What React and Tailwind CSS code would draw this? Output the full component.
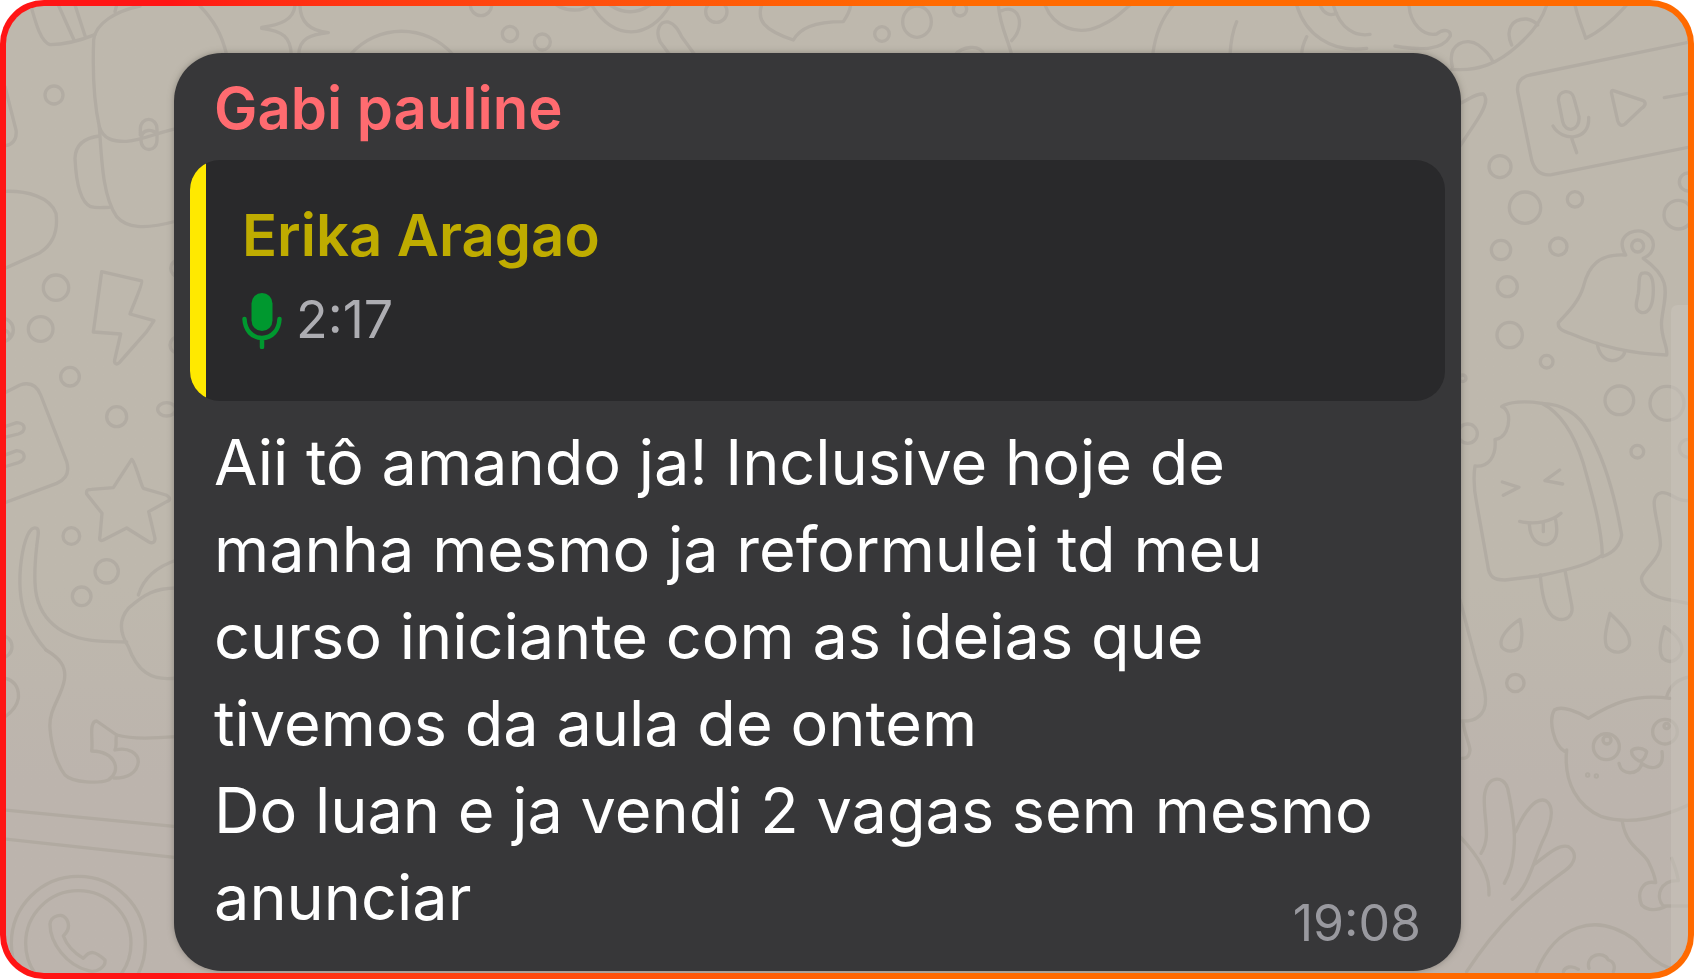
import React from 'react';

// Doodles are drawn in groups. Each group has its own origin on the 1695x980
// wallpaper and uses units of a third of a pixel.
const doodles = [
  {
    x: 0,
    y: 0,
    paths: [
      'M92 15C105 60 120 125 150 134C200 134 245 120 285 104M175 15L222 120M225 15L257 113',
      'M420 18C350 32 285 70 281 120C278 200 280 300 298 380C310 418 340 425 380 424C430 420 470 398 530 386M345 35L350 15M600 18C640 60 665 100 680 165',
      'M298 408C250 414 226 435 225 475C228 540 240 605 272 620C290 625 310 622 328 622M298 380C305 480 308 590 350 650C380 684 430 690 530 663',
      'M421 405V388C421 348 471 348 471 388V420C471 458 423 458 423 420C423 380 465 390 470 402',
      'M15 260L48 390C52 420 35 435 15 437',
      'M15 574C80 572 150 590 168 640C176 700 155 735 120 758L15 805',
      'M305 815L425 843C430 850 395 925 390 942L462 962L440 995L358 1088C350 1096 342 1090 344 1080L362 1002L280 996Z',
      'M785 82C840 75 882 60 885 15M900 15C900 60 925 92 985 98C930 104 897 115 896 165M785 85C850 93 872 112 874 165',
    ],
    circles: [[162, 285, 27], [168, 863, 38], [122, 987, 37], [5, 990, 35], [538, 805, 26]],
  },
  {
    x: 0,
    y: 330,
    paths: [
      'M15 188L60 165C90 155 110 165 122 195L200 395C210 430 195 450 170 460L15 518',
      'M15 290L50 278C80 280 78 305 55 312L15 322M15 375L50 362C80 365 78 390 55 398L15 410',
      'M395 388C405 392 422 465 430 475L498 495C512 502 512 512 500 515L446 545L465 625C465 640 455 640 447 636L380 594L310 630C300 634 297 630 300 618L306 550L260 492C258 480 262 478 275 478L340 473Z',
      'M138 960C90 905 45 830 64 690C72 630 90 585 110 595C120 600 112 625 110 650C98 760 95 850 190 905C250 938 320 935 380 936',
      'M530 690C470 710 430 745 415 795M530 774C465 775 435 790 385 835C355 870 360 910 385 950C410 1020 450 1055 530 1044',
      'M15 0C25 5 30 12 30 20',
    ],
    circles: [[210, 140, 28], [350, 260, 30], [214, 618, 25], [320, 724, 35], [245, 799, 28], [535, 45, 25], [2, 950, 34]],
    ellipses: [[500, 238, 27, 20]],
  },
  {
    x: 0,
    y: 650,
    faint: true,
    paths: [
      'M138 0C180 25 200 50 193 90C185 140 145 180 150 235C155 300 175 350 195 375C220 400 300 400 325 390C365 365 350 305 275 303C280 270 265 215 290 213L350 255C400 268 460 265 530 260',
      'M350 255C345 270 352 285 345 300C385 290 415 310 415 335C412 370 380 385 342 384',
      'M15 85C40 90 58 110 55 145C50 175 30 190 15 200',
      'M15 480L530 530M15 567L530 623',
      'M150 822C152 800 185 785 200 808C210 825 208 840 190 858C200 885 225 910 250 925C270 900 285 902 315 930C318 950 290 970 265 962C200 945 150 880 150 822Z',
    ],
    circles: [[235, 880, 201], [235, 880, 158]],
  },
  {
    x: 280,
    y: 0,
    paths: [
      'M210 165C290 70 440 70 520 165',
      'M830 15C860 35 910 35 930 15M935 15C1000 125 1110 120 1170 15M990 15C1030 42 1070 42 1110 15',
      'M1170 165L1140 125C1125 90 1140 62 1165 66C1185 72 1195 90 1205 110L1245 165',
      'M1445 15C1430 60 1450 90 1540 120C1560 85 1600 65 1690 65C1700 50 1710 35 1712 15',
    ],
    circles: [[603, 15, 32], [690, 102, 23], [787, 126, 24], [1309, 35, 32]],
  },
  {
    x: 840,
    y: 0,
    paths: [
      'M475 15C480 80 505 120 515 165M485 32C535 10 560 75 515 122M345 165C365 140 420 130 432 165',
      'M615 15C640 80 710 110 780 78C830 55 840 40 870 15M1000 15C960 60 945 110 938 165M1190 65C1175 100 1172 130 1170 165',
      'M1370 15C1395 100 1470 160 1580 145M1480 15C1500 90 1550 110 1590 103M1400 110C1390 130 1385 150 1385 165M1440 15C1450 40 1470 50 1490 40',
    ],
    circles: [[126, 102, 22], [360, 28, 20]],
    ellipses: [[231, 65, 43, 47]],
  },
  {
    x: 1395,
    y: 0,
    paths: [
      'M42 15C45 70 85 110 125 102C145 85 168 90 166 108C140 155 70 150 0 138',
      'M172 200C155 130 215 110 250 135C270 150 285 165 292 182M350 135C330 90 350 55 395 57C410 60 420 65 428 75',
      'M170 208C250 215 310 190 370 135C410 100 440 65 455 15',
      'M540 15C550 60 565 90 572 115C615 95 655 60 695 15',
      'M890 125L405 225C375 232 365 250 368 275L410 480C420 515 440 528 470 524L890 440',
      'M490 300C490 270 530 265 537 295L552 350C555 395 510 400 503 365ZM474 378C500 425 585 425 581 352M530 415L545 458',
      'M655 272L745 302C755 310 750 318 740 325L690 372C680 380 672 375 668 362L650 282C648 275 650 270 655 272Z',
      'M808 293L890 278',
      'M195 310C220 300 240 280 265 282C285 300 260 340 240 370L195 438',
      'M692 765C610 760 580 800 565 860C550 910 510 945 490 968C488 985 500 992 530 1002C620 1040 700 1060 815 1065C820 1040 795 1010 800 960C810 880 835 840 745 775M692 765C660 710 710 685 745 695C790 715 780 760 745 775',
      'M740 820C770 812 775 840 775 870C775 910 765 940 740 938C715 930 725 905 730 880C735 850 728 830 740 820Z',
      'M607 1030C615 1100 685 1090 690 1052',
    ],
    circles: [[315, 500, 33], [390, 623, 47], [540, 598, 23], [490, 740, 26], [318, 750, 29], [337, 860, 30], [344, 1005, 38], [455, 1085, 19], [728, 738, 18], [850, 644, 43], [880, 546, 27]],
  },
  {
    x: 1395,
    y: 330,
    paths: [
      'M320 230C340 215 390 212 440 220C500 250 540 320 565 400C590 490 620 590 622 675C590 700 540 715 430 738L330 750C295 750 282 740 278 705L245 520C235 470 235 440 240 408C280 412 305 380 300 328C330 325 345 290 340 255C335 240 330 232 320 230Z',
      'M440 220C500 222 550 250 580 305C630 390 660 500 680 615C675 650 650 670 622 680',
      'M322 456L372 472L325 496M494 420L450 452L503 462',
      'M374 574C420 585 470 575 498 550M403 582C405 630 430 645 455 644C485 635 490 610 482 570M445 580V605',
      'M436 735C440 790 450 830 465 850C485 880 540 875 530 825L510 722',
      'M375 868C340 890 310 925 320 950C335 970 365 965 375 950C385 920 380 895 375 868ZM645 850C635 890 625 925 635 950C655 975 690 970 703 945C710 910 675 880 645 850ZM808 890C795 930 790 965 803 985C825 1005 850 990 860 965C865 930 830 905 808 890Z',
      'M890 510C845 520 830 485 800 488C765 495 780 540 785 570C800 640 805 660 770 700C735 740 735 745 745 765C780 820 850 805 890 825',
      'M195 810L245 1000C265 1060 285 1120 260 1150C240 1175 215 1173 200 1173',
    ],
    circles: [[218, 311, 29], [673, 211, 43], [816, 220, 51], [727, 365, 19], [880, 355, 27], [203, 145, 10]],
  },
  {
    x: 1395,
    y: 650,
    faint: true,
    paths: [
      'M205 220C208 250 222 275 225 300C222 325 210 325 200 325',
      'M580 205C550 185 500 165 478 180C460 210 475 285 510 305M580 205C650 160 720 130 825 145M815 140C825 105 850 85 890 80M515 300C505 400 550 470 620 500C700 525 800 505 890 460',
      'M710 302C720 292 745 292 755 305C752 325 740 335 732 333C718 325 708 315 710 302ZM672 340C680 380 735 375 740 340C760 358 810 365 801 305',
      'M682 515C695 590 740 600 760 635C775 665 780 680 782 698M782 698C740 690 725 730 740 765C760 785 790 780 815 768M850 692C795 690 780 740 805 768H890M850 692C845 660 835 640 830 625',
      'M195 560C260 630 285 680 282 735M258 610C290 560 265 510 268 440C275 375 325 375 338 415C350 470 360 530 358 580C355 640 345 670 328 700',
      'M362 545C385 490 420 440 452 452C480 470 470 520 440 580C410 650 400 710 352 748M415 645C450 620 490 580 520 590C550 610 540 640 510 662C400 740 310 820 215 965',
      'M425 965C480 830 600 780 720 870C750 900 770 935 825 955M505 965C510 950 530 945 550 958M582 955C570 915 625 900 640 930C660 935 660 955 655 965',
    ],
    circles: [[361, 99, 26], [634, 290, 39], [810, 245, 37], [636, 270, 12], [815, 228, 8], [578, 375, 3], [604, 378, 3]],
  },
];

function Wallpaper() {
  return (
    <svg
      className="absolute inset-0 h-full w-full"
      viewBox="6 6 1682 967"
      preserveAspectRatio="xMidYMid slice"
      fill="none"
      strokeLinecap="round"
      strokeLinejoin="round"
      aria-hidden="true"
    >
      {doodles.map((group) => (
        <g
          key={`${group.x}-${group.y}`}
          transform={`translate(${group.x} ${group.y}) scale(0.33333)`}
          stroke={group.faint ? '#b1aaa1' : '#b2aca3'}
          strokeWidth="10"
        >
          {group.paths.map((d) => (
            <path key={d} d={d} />
          ))}
          {group.circles.map(([cx, cy, r]) => (
            <circle key={`${cx}-${cy}`} cx={cx} cy={cy} r={r} />
          ))}
          {(group.ellipses || []).map(([cx, cy, rx, ry]) => (
            <ellipse key={`${cx}-${cy}`} cx={cx} cy={cy} rx={rx} ry={ry} />
          ))}
        </g>
      ))}
      {/* Scroll track */}
      <path d="M1671 312Q1671 305 1678 305H1688V973H1671Z" fill="#cac4bb" fillOpacity="0.5" />
    </svg>
  );
}

function MicIcon() {
  return (
    <svg className="h-[57px] w-10 shrink-0" viewBox="0 0 40 57" fill="none" aria-hidden="true">
      <rect x="9.500" y="1" width="21" height="38" rx="10.500" fill="#00982f" />
      <path
        d="M2.500 27C3 38 10 46 20 46S37 38 37.500 27M20 46V55"
        stroke="#00982f"
        strokeWidth="4.500"
        strokeLinecap="round"
      />
    </svg>
  );
}

function QuotedMessage({ author, duration }) {
  return (
    <blockquote className="flex h-[241px] overflow-hidden rounded-[30px] bg-[#29292b]">
      <div className="w-4 shrink-0 bg-[#ffe900]" />
      <div className="pt-10 pl-9">
        <p className="text-[58px] leading-[71px] font-semibold text-[#bfac00]">{author}</p>
        <div className="mt-2.5 flex items-center gap-3.5">
          <MicIcon />
          <span className="text-[52px] leading-[78px] text-[#adadb2]">{duration}</span>
        </div>
      </div>
    </blockquote>
  );
}

function MessageBubble({ author, quote, lines, time }) {
  return (
    <article className="relative rounded-[48px] bg-[#373739] px-4 pb-[30px] shadow-[0_0_6px_rgba(90,85,78,0.5)]">
      <h2 className="px-6 pt-[18px] pb-[14px] text-[58px] leading-[75px] font-semibold text-[#ff6b70]">{author}</h2>
      <QuotedMessage author={quote.author} duration={quote.duration} />
      <div className="px-6 pt-[18px]">
        <p className="text-[63px] leading-[87px] text-white">
          {lines.map((line) => (
            <span key={line} className="block whitespace-nowrap">
              {line}
            </span>
          ))}
        </p>
      </div>
      <time className="absolute right-10 bottom-4 text-[50px] leading-[64px] text-[#99999f]">{time}</time>
    </article>
  );
}

export default function App() {
  return (
    <main className="min-h-screen bg-white pr-px pb-px font-['Inter',sans-serif]">
      <div className="rounded-[44px] bg-linear-to-r from-[#ff1515] from-10% to-[#ff6a00] to-55% p-1.5">
        <div className="relative overflow-hidden rounded-[38px] bg-linear-to-b from-[#beb8ad] from-60% to-[#bcb4ad] to-80% pt-[47px] pr-[227px] pb-0.5 pl-[168px]">
          <Wallpaper />
          <MessageBubble
            author="Gabi pauline"
            quote={{ author: 'Erika Aragao', duration: '2:17' }}
            lines={[
              'Aii tô amando ja! Inclusive hoje de',
              'manha mesmo ja reformulei td meu',
              'curso iniciante com as ideias que',
              'tivemos da aula de ontem',
              'Do luan e ja vendi 2 vagas sem mesmo',
              'anunciar',
            ]}
            time="19:08"
          />
        </div>
      </div>
    </main>
  );
}
